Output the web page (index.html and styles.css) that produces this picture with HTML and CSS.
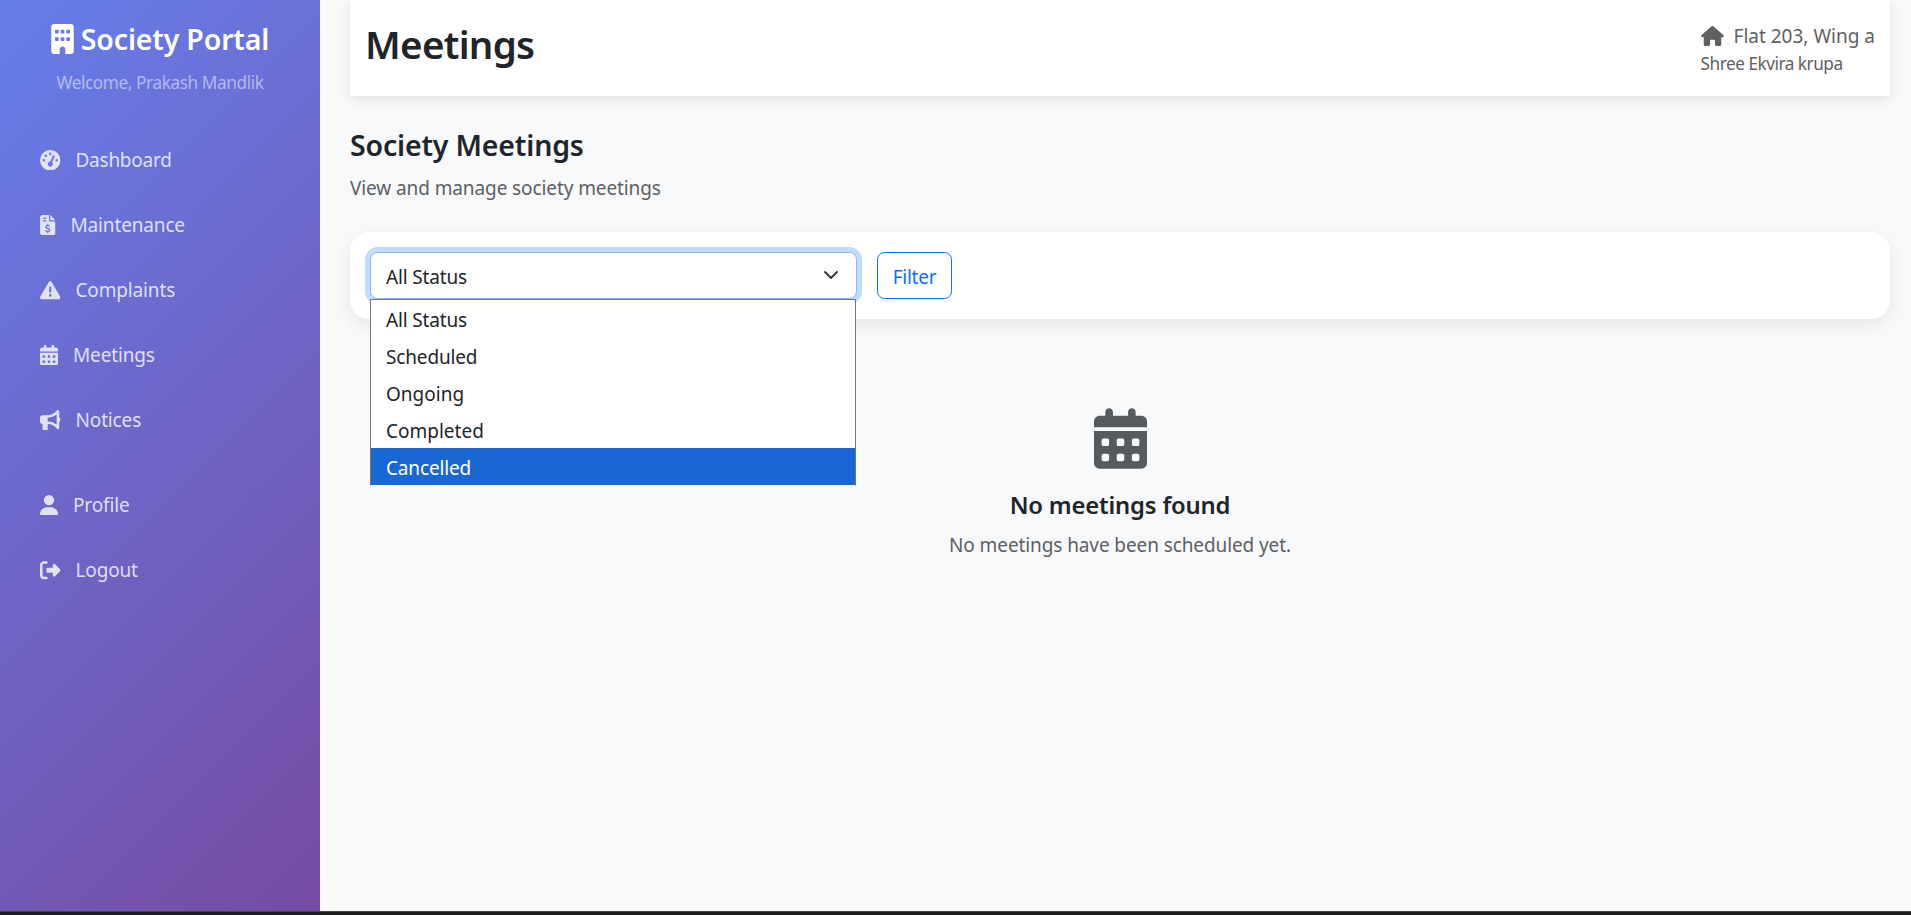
FILE: index.html
```html
<!DOCTYPE html>
<html lang="en">
<head>
<meta charset="utf-8">
<title>Meetings - Society Portal</title>
<link rel="stylesheet" href="styles.css">
</head>
<body>
<svg class="sprite" aria-hidden="true">
  <symbol id="building" viewBox="0 0 384 512"><path fill-rule="evenodd" d="M48 0C21.500 0 0 21.500 0 48V464c0 26.500 21.500 48 48 48h96V432c0-26.500 21.500-48 48-48s48 21.500 48 48v80h96c26.500 0 48-21.500 48-48V48c0-26.500-21.500-48-48-48H48zM80 224h32q16 0 16 16v32q0 16-16 16H80q-16 0-16-16v-32q0-16 16-16zM176 224h32q16 0 16 16v32q0 16-16 16h-32q-16 0-16-16v-32q0-16 16-16zM272 224h32q16 0 16 16v32q0 16-16 16h-32q-16 0-16-16v-32q0-16 16-16zM80 96h32q16 0 16 16v32q0 16-16 16H80q-16 0-16-16v-32q0-16 16-16zM176 96h32q16 0 16 16v32q0 16-16 16h-32q-16 0-16-16v-32q0-16 16-16zM272 96h32q16 0 16 16v32q0 16-16 16h-32q-16 0-16-16v-32q0-16 16-16z"/></symbol>
  <symbol id="gauge" viewBox="0 0 512 512"><path d="M0 256a256 256 0 1 1 512 0A256 256 0 1 1 0 256zM288 96a32 32 0 1 0 -64 0 32 32 0 1 0 64 0zM256 416c35.300 0 64-28.700 64-64c0-17.400-6.900-33.100-18.100-44.600L366 161.700c5.300-12.100-.2-26.300-12.300-31.600s-26.300 .2-31.600 12.300L257.900 288c-.6 0-1.300 0-1.900 0c-35.300 0-64 28.700-64 64s28.700 64 64 64zM176 144a32 32 0 1 0 -64 0 32 32 0 1 0 64 0zM96 288a32 32 0 1 0 0-64 32 32 0 1 0 0 64zm352-32a32 32 0 1 0 -64 0 32 32 0 1 0 64 0z"/></symbol>
  <symbol id="invoice" viewBox="0 0 384 512"><path d="M64 0C28.700 0 0 28.700 0 64V448c0 35.300 28.700 64 64 64H320c35.300 0 64-28.700 64-64V160H256c-17.700 0-32-14.300-32-32V0H64zM256 0V128H384L256 0zM64 80c0-8.800 7.200-16 16-16h64c8.800 0 16 7.200 16 16s-7.200 16-16 16H80c-8.800 0-16-7.200-16-16zm0 64c0-8.800 7.200-16 16-16h64c8.800 0 16 7.200 16 16s-7.200 16-16 16H80c-8.800 0-16-7.200-16-16zm128 72c8.800 0 16 7.200 16 16v17.300c8.500 1.200 16.700 3.100 24.100 5.100c8.500 2.300 13.600 11 11.300 19.600s-11 13.600-19.600 11.300c-11.100-3-22-5.200-32.100-5.300c-8.400-.1-17.400 1.800-23.600 5.500c-5.700 3.400-8.100 7.300-8.100 12.800c0 3.700 1.300 6.500 7.300 10.100c6.900 4.100 16.600 7.100 29.200 10.900l.5 .1c11.300 3.400 25.300 7.600 36.300 14.600c12.100 7.600 22.400 19.700 22.700 38.200c.3 19.300-9.600 33.300-22.900 41.600c-7.700 4.800-16.400 7.600-25.100 9.100V440c0 8.800-7.200 16-16 16s-16-7.200-16-16V422.200c-11.200-2.100-21.700-5.700-30.900-8.900c-2.100-.7-4.200-1.400-6.200-2.100c-8.400-2.800-12.900-11.900-10.100-20.200s11.900-12.900 20.200-10.100c2.500 .8 4.800 1.600 7.100 2.400c13.600 4.600 24.600 8.400 36.300 8.700c9.100 .3 17.900-1.700 23.700-5.300c5.100-3.200 7.900-7.300 7.800-14c-.1-4.600-1.800-7.800-7.700-11.600c-6.800-4.300-16.500-7.400-29-11.200l-1.600-.5c-11-3.300-24.300-7.300-34.800-13.700c-12-7.200-22.600-18.900-22.700-37.300c-.1-19.400 10.800-32.800 23.800-40.500c7.500-4.400 15.800-7.200 24.100-8.700V232c0-8.800 7.200-16 16-16z"/></symbol>
  <symbol id="warning" viewBox="0 0 512 512"><path d="M256 32c14.200 0 27.300 7.500 34.500 19.800l216 368c7.300 12.400 7.300 27.700 .2 40.100S486.300 480 472 480H40c-14.300 0-27.600-7.700-34.700-20.100s-7-27.800 .2-40.100l216-368C228.700 39.500 241.800 32 256 32zm0 128c-13.300 0-24 10.700-24 24V296c0 13.300 10.700 24 24 24s24-10.700 24-24V184c0-13.300-10.700-24-24-24zm32 224a32 32 0 1 0 -64 0 32 32 0 1 0 64 0z"/></symbol>
  <symbol id="calendar" viewBox="0 0 448 512"><path fill-rule="evenodd" d="M128 0c17.700 0 32 14.300 32 32V64H288V32c0-17.700 14.300-32 32-32s32 14.300 32 32V64h48c26.500 0 48 21.500 48 48v48H0V112C0 85.500 21.500 64 48 64H96V32c0-17.700 14.300-32 32-32zM0 192H448V464c0 26.500-21.500 48-48 48H48c-26.500 0-48-21.500-48-48V192zM80 256h32q16 0 16 16v32q0 16-16 16H80q-16 0-16-16v-32q0-16 16-16zM208 256h32q16 0 16 16v32q0 16-16 16h-32q-16 0-16-16v-32q0-16 16-16zM336 256h32q16 0 16 16v32q0 16-16 16h-32q-16 0-16-16v-32q0-16 16-16zM80 384h32q16 0 16 16v32q0 16-16 16H80q-16 0-16-16v-32q0-16 16-16zM208 384h32q16 0 16 16v32q0 16-16 16h-32q-16 0-16-16v-32q0-16 16-16zM336 384h32q16 0 16 16v32q0 16-16 16h-32q-16 0-16-16v-32q0-16 16-16z"/></symbol>
  <symbol id="bullhorn" viewBox="0 0 512 512"><path d="M480 32c0-12.900-7.800-24.600-19.800-29.600s-25.700-2.200-34.900 6.900L381.700 53c-48 48-113.100 75-181 75H192 160 64c-35.300 0-64 28.700-64 64v96c0 35.300 28.700 64 64 64l0 128c0 17.700 14.300 32 32 32h64c17.700 0 32-14.300 32-32V352l8.700 0c67.900 0 133 27 181 75l43.600 43.600c9.200 9.200 22.900 11.900 34.900 6.900s19.800-16.600 19.800-29.600V300.400c18.600-8.800 32-32.500 32-60.400s-13.400-51.600-32-60.400V32zm-64 76.700V240 371.300C357.200 317.800 280.500 288 200.700 288H192V192h8.700c79.800 0 156.500-29.800 215.300-83.300z"/></symbol>
  <symbol id="user" viewBox="0 0 448 512"><path d="M224 256A128 128 0 1 0 224 0a128 128 0 1 0 0 256zm-45.700 48C79.800 304 0 383.800 0 482.300C0 498.700 13.300 512 29.700 512H418.300c16.400 0 29.700-13.300 29.700-29.700C448 383.800 368.200 304 269.700 304H178.300z"/></symbol>
  <symbol id="logout" viewBox="0 0 512 512"><path d="M377.900 105.900L500.700 228.700c7.200 7.200 11.300 17.100 11.300 27.300s-4.100 20.100-11.300 27.300L377.900 406.100c-6.400 6.400-15 9.900-24 9.900c-18.700 0-33.900-15.200-33.900-33.900l0-62.100-128 0c-17.700 0-32-14.300-32-32l0-64c0-17.700 14.300-32 32-32l128 0 0-62.100c0-18.700 15.200-33.900 33.900-33.900c9 0 17.600 3.600 24 9.900zM160 96L96 96c-17.700 0-32 14.300-32 32l0 256c0 17.700 14.300 32 32 32l64 0c17.700 0 32 14.300 32 32s-14.300 32-32 32l-64 0c-53 0-96-43-96-96L0 128C0 75 43 32 96 32l64 0c17.700 0 32 14.300 32 32s-14.300 32-32 32z"/></symbol>
  <symbol id="home" viewBox="0 0 576 512"><path d="M575.800 255.500c0 18-15 32.100-32 32.100h-32l.7 160.200c0 2.700-.2 5.400-.5 8.100V472c0 22.100-17.900 40-40 40H456c-1.100 0-2.200 0-3.300-.1c-1.400 .1-2.800 .1-4.200 .1H416 392c-22.100 0-40-17.900-40-40V448 384c0-17.700-14.300-32-32-32H256c-17.700 0-32 14.300-32 32v64 24c0 22.100-17.900 40-40 40H160 128.100c-1.500 0-3-.1-4.500-.2c-1.200 .1-2.400 .2-3.600 .2H104c-22.100 0-40-17.900-40-40V360c0-.9 0-1.900 .1-2.800V287.600H32c-18 0-32-14-32-32.100c0-9 3-17 10-24L266.400 8c7-7 15-8 22-8s15 2 21 7L564.800 231.500c8 7 12 15 11 24z"/></symbol>
</svg>
<div class="app">
  <nav class="sidebar">
    <div class="brand">
      <h4 class="brand-title"><svg class="brand-icon"><use href="#building"/></svg><span>Society Portal</span></h4>
      <p class="welcome">Welcome, Prakash Mandlik</p>
    </div>
    <ul class="menu">
      <li><a class="link"><svg class="icon"><use href="#gauge"/></svg><span class="tight">Dashboard</span></a></li>
      <li><a class="link"><svg class="icon w15"><use href="#invoice"/></svg><span>Maintenance</span></a></li>
      <li><a class="link"><svg class="icon"><use href="#warning"/></svg><span>Complaints</span></a></li>
      <li><a class="link"><svg class="icon w18"><use href="#calendar"/></svg><span>Meetings</span></a></li>
      <li><a class="link"><svg class="icon"><use href="#bullhorn"/></svg><span>Notices</span></a></li>
      <li class="account"><a class="link"><svg class="icon w18"><use href="#user"/></svg><span>Profile</span></a></li>
      <li><a class="link"><svg class="icon"><use href="#logout"/></svg><span>Logout</span></a></li>
    </ul>
  </nav>
  <main class="main">
    <header class="topbar">
      <h2 class="page-title">Meetings</h2>
      <div class="flat">
        <div class="flat-line"><svg class="home-icon"><use href="#home"/></svg><span>Flat 203, Wing a</span></div>
        <small class="society">Shree Ekvira krupa</small>
      </div>
    </header>
    <section class="intro">
      <h4 class="section-title">Society Meetings</h4>
      <p class="muted">View and manage society meetings</p>
    </section>
    <div class="card">
      <div class="select-wrap">
        <div class="select"><span>All Status</span>
          <svg class="chevron" viewBox="0 0 16 16"><path d="m2 5 6 6 6-6"/></svg>
        </div>
        <ul class="options">
          <li>All Status</li>
          <li>Scheduled</li>
          <li class="loose">Ongoing</li>
          <li class="loose">Completed</li>
          <li class="active">Cancelled</li>
        </ul>
      </div>
      <button class="filter">Filter</button>
    </div>
    <section class="empty">
      <svg class="empty-icon"><use href="#calendar"/></svg>
      <h5 class="empty-title">No meetings found</h5>
      <p class="empty-text">No meetings have been scheduled yet.</p>
    </section>
  </main>
</div>
<div class="edge"></div>
</body>
</html>
```
FILE: styles.css
```css
* { box-sizing: border-box; }
html, body { height: 100%; }
body {
  margin: 0;
  display: flex;
  flex-direction: column;
  overflow: hidden;
  background: #f8f9fb;
  color: #212529;
  font: 400 19px/30px "Noto Sans", "Open Sans", sans-serif;
  letter-spacing: -0.15px;
}
h2, h4, h5, p, ul { margin: 0; padding: 0; }
h2, h4, h5 { font-weight: 600; letter-spacing: -0.17px; }
ul { list-style: none; }
svg { display: block; fill: currentColor; flex: none; }
.sprite { display: none; }

.app { flex: 1; display: flex; min-height: 0; }
.edge { height: 4px; background: #1c1f1e; border-top: 1px solid #444746; }

.sidebar {
  width: 320px;
  flex: none;
  padding: 20px;
  background: linear-gradient(135deg, #667eea 0%, #764ba2 100%);
}
.brand { display: flex; flex-direction: column; align-items: center; gap: 12px; }
.brand-title {
  display: flex;
  align-items: center;
  gap: 7px;
  color: #fff;
  font-size: 28.5px;
  line-height: 37px;
  padding-top: 1px;
}
.brand-icon { width: 23px; height: 30px; margin-top: -2px; }
.welcome { color: rgba(255, 255, 255, .5); font-size: 17.2px; line-height: 26px; letter-spacing: -0.4px; }
.menu { margin-top: 34px; display: flex; flex-direction: column; gap: 5px; }
.account { margin-top: 20px; }
.link {
  display: flex;
  align-items: center;
  gap: 15px;
  height: 60px;
  padding: 0 20px;
  color: rgba(255, 255, 255, .8);
}
.icon { width: 20.5px; height: 20.5px; }
.w15 { width: 15.5px; }
.w18 { width: 18px; }
.tight { letter-spacing: -0.25px; }
.loose { letter-spacing: 0; }

.main { flex: 1; padding: 0 21px 0 30px; }
.topbar {
  display: flex;
  justify-content: space-between;
  height: 96px;
  padding: 20px 15px 0;
  background: #fff;
  box-shadow: 0 2.5px 12.5px rgba(0, 0, 0, .1);
}
.page-title { font-size: 38.5px; line-height: 48px; letter-spacing: -0.7px; }
.flat { color: #5f6061; padding-top: 1px; }
.flat-line { display: flex; align-items: center; gap: 10px; letter-spacing: 0; }
.home-icon { width: 23px; height: 20px; margin-top: -1px; }
.society { display: block; font-size: 17.2px; line-height: 26px; letter-spacing: -0.47px; }

.intro { padding-top: 31px; }
.section-title { font-size: 28.5px; line-height: 36px; margin-bottom: 10px; }
.muted { color: #5d6063; letter-spacing: -0.1px; }

.card {
  display: flex;
  gap: 20px;
  height: 87px;
  margin-top: 29px;
  padding: 20px;
  background: #fff;
  border-radius: 19px;
  box-shadow: 0 6px 19px rgba(0, 0, 0, .08);
}
.select-wrap { position: relative; width: 487px; }
.select {
  display: flex;
  align-items: center;
  justify-content: space-between;
  height: 47px;
  padding: 2px 17px 0 15px;
  background: #fff;
  border: 1px solid #86b7fe;
  border-radius: 7.5px;
  box-shadow: 0 0 0 5px #c2dbfe;
}
.chevron { width: 16px; height: 16px; margin-top: -3px; fill: none; stroke: #343a40; stroke-width: 2; stroke-linecap: round; stroke-linejoin: round; }
.options {
  position: absolute;
  top: 47px;
  left: 0;
  z-index: 2;
  width: 486px;
  height: 187px;
  background: #fff;
  border: 1px solid #767676;
  border-bottom-color: #fff;
}
.options li { height: 37px; line-height: 41px; padding-left: 15px; }
.options .active { background: #1967d2; color: #fff; }
.filter {
  width: 75px;
  height: 47px;
  padding: 2px 0 0;
  background: transparent;
  border: 1px solid #0d6efd;
  border-radius: 7.5px;
  color: #0d6efd;
  font: inherit;
  letter-spacing: -0.25px;
}

.empty { display: flex; flex-direction: column; align-items: center; padding-top: 89px; }
.empty-icon { width: 53px; height: 61px; color: #585b5e; }
.empty-title { margin-top: 21px; font-size: 23.8px; line-height: 30px; }
.empty-text { margin-top: 10px; color: #5d6063; letter-spacing: -0.1px; }
```
